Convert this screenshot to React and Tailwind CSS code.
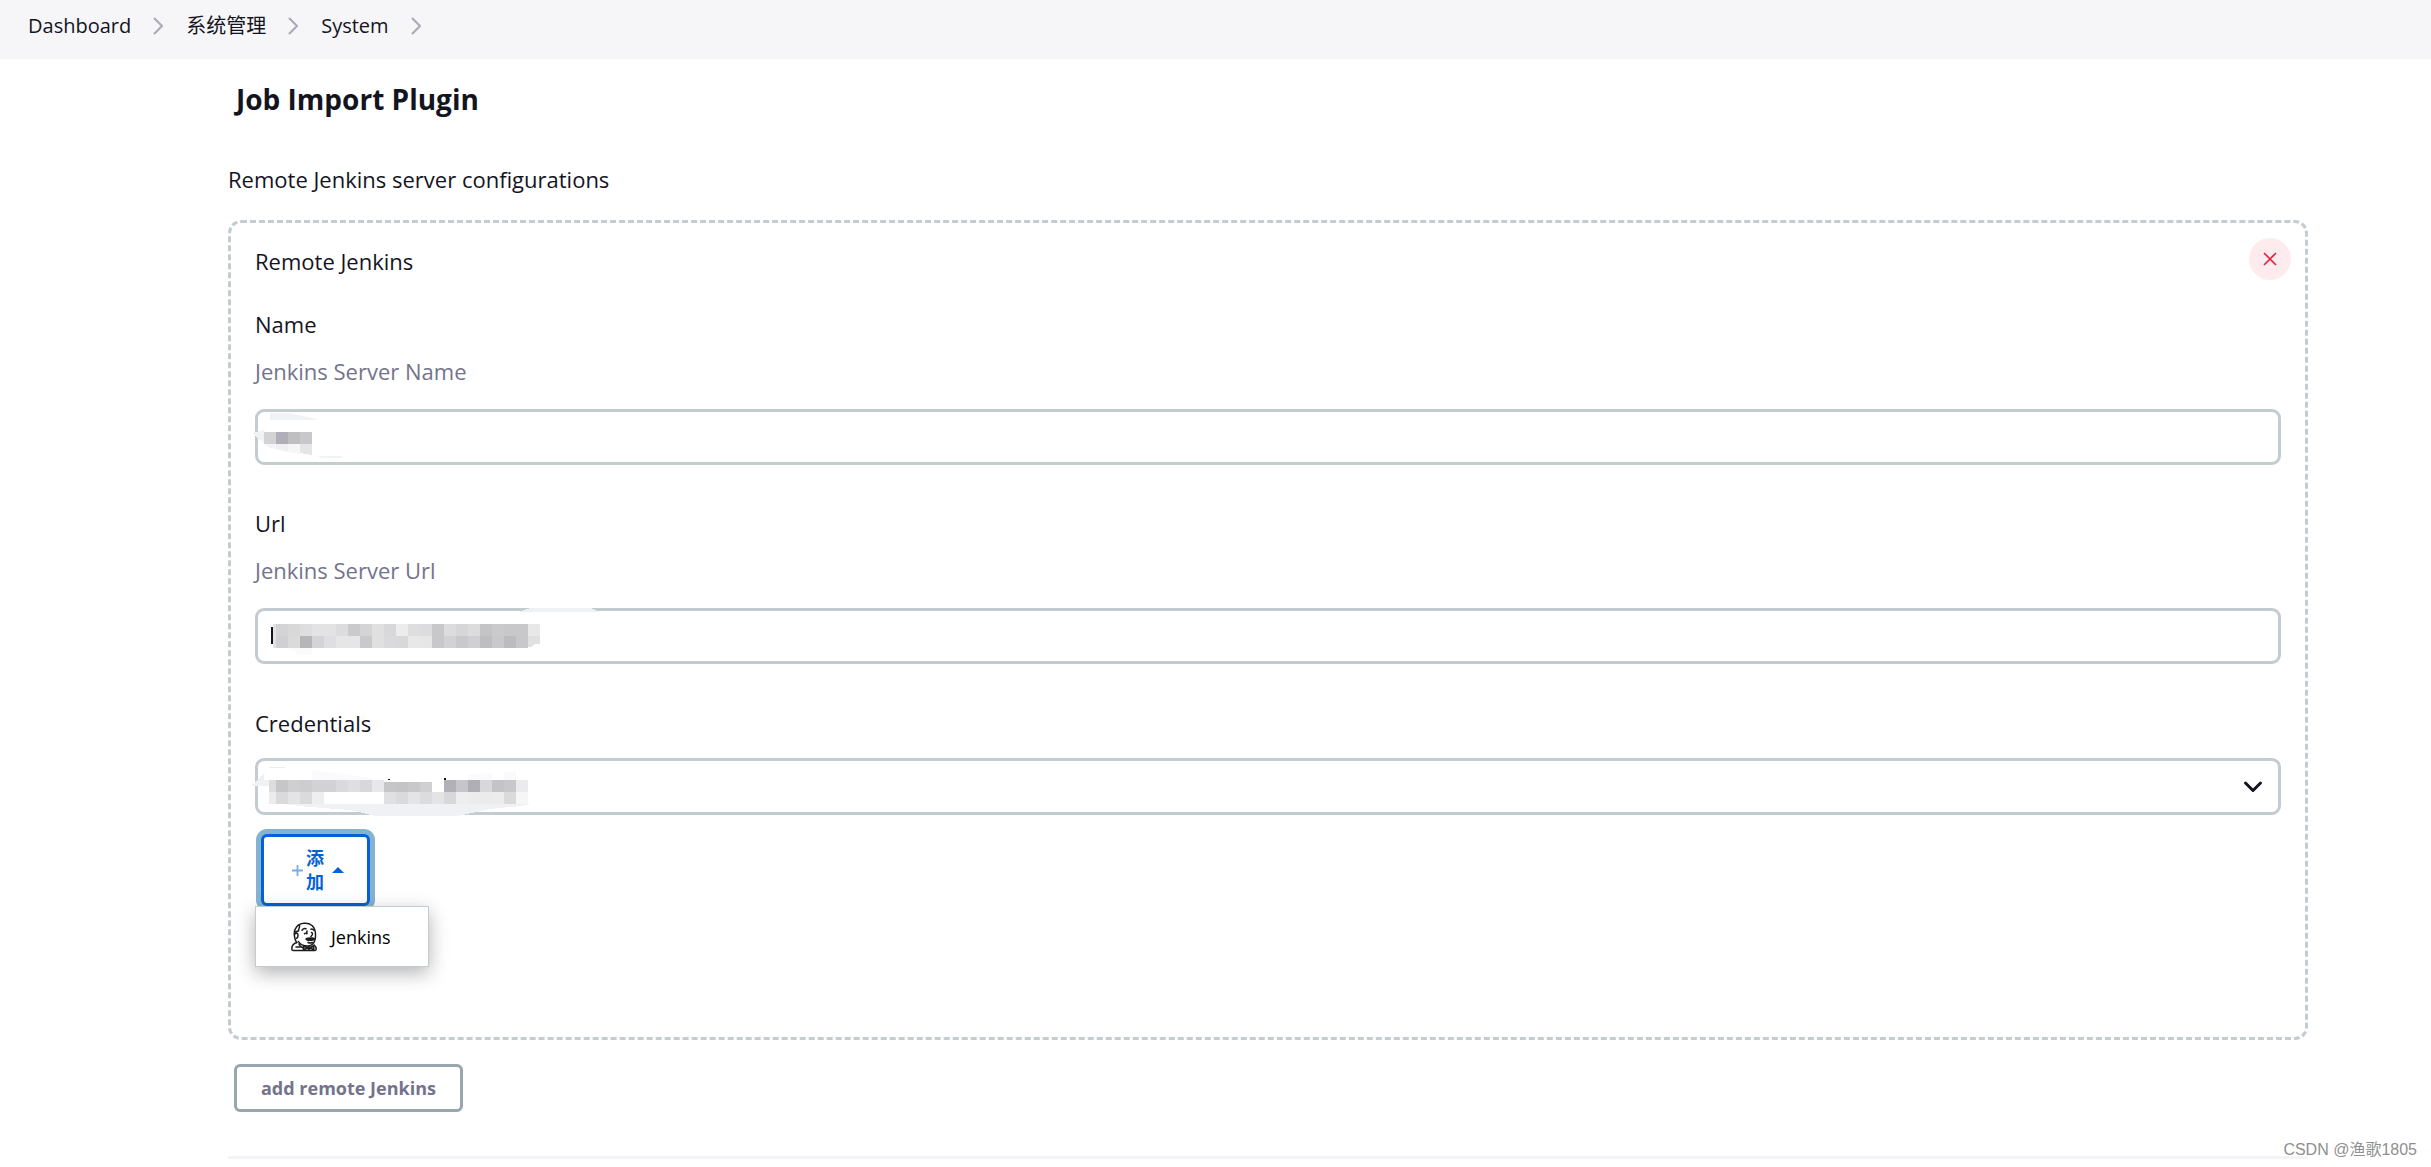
const SANS = "font-['Open_Sans','Noto_Sans_CJK_SC',sans-serif]";

const FIELD =
  "block w-full rounded-[9px] border-3 border-[#c3ccd1] bg-white px-4 text-[22px] text-[#14141f] outline-none";

const NAME_CELLS = [
  { x: 14, y: 27, h: 12, colors: ["#d3d3d5", "#b0afb7", "#bfbec1", "#c8c8cb"] },
];

const URL_CELLS = [
  {
    x: 26, y: 20, h: 12,
    colors: [
      "#d4d4d6", "#d8d8d8", "#dedede", "#e3e3e5", "#e3e3e3", "#dcdcde", "#cacacc", "#d4d4d6",
      "#e0e0e0", "#d8d8da", "#ececec", "#dedede", "#dcdcdf", "#c8c8ca", "#dcdcde", "#d6d6d8",
      "#dcdcdc", "#c4c4c6", "#cacacc", "#c8c8ca", "#c8c8ca", "#e8e8e8",
    ],
  },
  {
    x: 26, y: 32, h: 12,
    colors: [
      "#d0d0d2", "#dadada", "#b6b6b8", "#d4d4d6", "#dfdfe1", "#e6e6e6", "#e6e6e6", "#c9c9cb",
      "#e0e0e0", "#dadadc", "#d8d8d8", "#e8e8e8", "#e6e6e6", "#c8c8ca", "#d2d2d4", "#c9c9cb",
      "#d0d0d2", "#bebec0", "#c9c9cb", "#bcbcbe", "#c8c8ca",
    ],
  },
];

const CREDENTIAL_CELLS = [
  {
    x: 26, y: 26, h: 12,
    colors: [
      "#c6c6c8", "#cfcfd1", "#cdcdcf", "#d2d2d4", "#d2d2d4", "#dadadc", "#dfdfe1", "#d8d8da", "#e8e8ea",
    ],
  },
  { x: 134, y: 28, h: 10, colors: ["#c6c6c8", "#c4c4c7", "#c8c8cb", "#d0d0d2"] },
  {
    x: 194, y: 26, h: 12,
    colors: ["#b2b1b7", "#c6c6ca", "#b0afb6", "#d8d8dc", "#c4c4c7", "#c8c8cb", "#ebebed"],
  },
  { x: 26, y: 38, h: 12, colors: ["#dadadc", "#e4e4e6", "#dadadc", "#eeeeee"] },
  {
    x: 134, y: 38, h: 12,
    colors: [
      "#e0e0e2", "#dadadc", "#e4e4e6", "#dcdcde", "#e4e4e6", "#d8d8da",
      "#eeeeee", "#ececec", "#ebebeb", "#ececec", "#dadada", "#f6f6f6",
    ],
  },
];

function Mosaic({ rows, children }) {
  return (
    <svg
      className="pointer-events-none absolute -top-1 -left-[5px]"
      width="360"
      height="66"
      viewBox="0 0 360 66"
      shapeRendering="crispEdges"
      aria-hidden="true"
    >
      {children}
      {rows.map((row) =>
        row.colors.map((color, i) => (
          <rect key={`${row.x}-${row.y}-${i}`} x={row.x + i * 12} y={row.y} width="12" height={row.h} fill={color} />
        ))
      )}
    </svg>
  );
}

function Separator() {
  return (
    <svg className="mx-[22px]" width="11" height="18" viewBox="0 0 11 18" fill="none" aria-hidden="true">
      <path d="M1.5 1.5 9 9l-7.5 7.5" stroke="#a9a9b8" strokeWidth="2" strokeLinecap="round" strokeLinejoin="round" />
    </svg>
  );
}

function JenkinsIcon() {
  return (
    <svg width="26" height="30" viewBox="0 0 26 30" fill="none" stroke="#1c1c1c" strokeWidth="1.5" strokeLinecap="round" strokeLinejoin="round" aria-hidden="true">
      <path d="M5.5 20.5C3 16 2 9 5.500 5 9 .6 17 .2 21 3.500c4 3.500 3.800 9 3.300 13-.5 4-3.300 7.500-7.300 7.500-4.500 0-8-1.500-9.500-4.500" />
      <path d="M8.500 3.500c.5 2-1 3-1 5.500M4 12c1.500-1.500 3-.8 3 1s-.2 3-1.500 3.200M7 9l-2.800 1" />
      <path d="M11 8.200c1-1.400 2.400-1.900 4-1.500M20 7.200c1.200-.3 2.200.2 2.800 1.200M13.500 11.800c.8-.8 1.800-.8 2.500 0M16 9l-.3 2.500M20.500 10.500c1 .2 1.500 1.800.3 3l-1 1" />
      <path d="M15 17c1.800-1 3-1.300 4.500-.8 1.500-.6 2.500-.4 4 .5-1.200 2-2.600 1.700-4 1.300-1.600.7-3.200.5-4.500-1z" fill="#1c1c1c" />
      <path d="M17 20.500c1.500.6 3 .6 4.300 0" />
      <path d="M6 20.500c-3.500 1-5.300 3.200-5.200 6.500 0 1 .4 1.600 1.400 1.600h21.500c1 0 1.500-.6 1.500-1.600 0-1.600-.8-3-2-4" />
      <path d="M8 22c.5 1.500 2 3 3.800 3.800M5 25h4" />
      <path d="m12.500 23.800 4.300 2-4.300 2.400zM22.800 23.500l-3.800 2.200 3.800 2.500z" fill="#777" />
      <circle cx="18" cy="26" r="1.300" fill="#1c1c1c" />
    </svg>
  );
}

function Breadcrumbs() {
  const items = ["Dashboard", "系统管理", "System"];
  return (
    <nav className="h-[59px] bg-[#f6f6f8] pl-7" aria-label="Breadcrumb">
      <ol className="flex h-[52px] items-center text-[20px] text-[#14141f]">
        {items.map((item) => (
          <li key={item} className="flex items-center">
            <a href="#">{item}</a>
            <Separator />
          </li>
        ))}
      </ol>
    </nav>
  );
}

function Field({ id, label, help, children }) {
  return (
    <div className="mb-[42px]">
      <label htmlFor={id} className="block">{label}</label>
      <p className="mt-[15px] mb-[22px] text-[#73738c]">{help}</p>
      <div className="relative">
        <input id={id} type="text" className={`${FIELD} h-14`} />
        {children}
      </div>
    </div>
  );
}

export default function App() {
  return (
    <div className={`relative min-h-screen bg-white ${SANS} text-[22px] leading-8 text-[#14141f]`}>
      <Breadcrumbs />
      <main className="mr-[123px] ml-[228px] pt-5">
        <h2 className="pl-2 text-[28px] leading-10 font-bold">Job Import Plugin</h2>
        <h3 className="mt-11 mb-[25px]">Remote Jenkins server configurations</h3>

        <section className="relative rounded-[13px] border-3 border-dashed border-[#c3ccd1] px-6 pt-[22px] pb-[131px]">
          <button
            type="button"
            aria-label="Remove"
            className="absolute top-[15px] right-[14px] flex size-[42px] items-center justify-center rounded-full bg-[#fdebed]"
          >
            <svg width="14" height="14" viewBox="0 0 14 14" fill="none" aria-hidden="true">
              <path d="m1.500 1.500 11 11M12.500 1.500l-11 11" stroke="#e6203c" strokeWidth="1.700" strokeLinecap="round" />
            </svg>
          </button>

          <div className="mb-[31px]">Remote Jenkins</div>

          <Field id="name" label="Name" help="Jenkins Server Name">
            <Mosaic rows={NAME_CELLS}>
              <path d="M20 8h17l30 6v1H20z" fill="#f1f2f3" />
              <path d="M2 28l12-3v14l-4-4z" fill="#f1f2f3" />
              <path d="M14 39h12v5l-6-1z" fill="#f5f5f5" />
              <path d="M26 39h12v8l-12-3z" fill="#f0f0f0" />
              <path d="M38 39h12v10l-12-2z" fill="#f6f6f6" />
              <path d="M50 39h12v11l-12-2z" fill="#e5e5e7" />
              <path d="M68 51h24v2H72z" fill="#f1f2f3" />
            </Mosaic>
          </Field>

          <Field id="url" label="Url" help="Jenkins Server Url">
            <Mosaic rows={URL_CELLS}>
              <path d="M268 8l12-4h61l6 3v1z" fill="#f0f1f2" />
              <path d="M21 23h2v17h-2z" fill="#14141f" />
              <path d="M23 20h3v24h-3z" fill="#e2e2e4" />
              <path d="M278 32h12v8h-5l-4 3h-3z" fill="#e0e0e3" />
              <path d="M38 44h24v7H50z" fill="#fbfbfb" />
            </Mosaic>
          </Field>

          <label htmlFor="credentials" className="mt-[43px] mb-[19px] block">Credentials</label>
          <div className="relative">
            <select id="credentials" className={`${FIELD} h-[57px] appearance-none`}>
              <option aria-label="Saved credential" value="" />
            </select>
            <Mosaic rows={CREDENTIAL_CELLS}>
              <path d="M62 16l60 8v2H62zM218 21l24-2v7h-24zM254 19l12-2v9h-12z" fill="#fafafa" />
              <path d="M19 13h16v1H19z" fill="#eeeeee" />
              <path d="M2 31l12-12v7h5v6H2z" fill="#f0f1f3" />
              <path d="M19 26h7v12h-7z" fill="#dddddf" />
              <path d="M19 38h7v12h-7z" fill="#ececec" />
              <path d="M32 50h250l-12 2-30 3-32 7h-82l-26-6-40-3z" fill="#f0f1f4" />
              <path d="M138 25h2v1h-2zM194 24h2v2h-2z" fill="#14141f" />
            </Mosaic>
            <svg className="pointer-events-none absolute top-[22px] right-[18px]" width="20" height="14" viewBox="0 0 20 14" fill="none" aria-hidden="true">
              <path d="m2.500 3 7.500 7.500L17.500 3" stroke="#14141f" strokeWidth="3" strokeLinecap="round" strokeLinejoin="round" />
            </svg>
          </div>

          <div className="relative mt-[19px]">
            <button
              type="button"
              aria-expanded="true"
              className="ml-1.5 flex h-[72px] w-[109px] items-center rounded-md border-3 border-[#0462d4] bg-white pl-7 text-[18px] leading-6 font-bold text-[#0462d4] ring-5 ring-[#84b3d1]"
            >
              <svg width="11" height="11" viewBox="0 0 11 11" aria-hidden="true">
                <path d="M5.500 0v11M0 5.500h11" stroke="#78ace8" strokeWidth="1.800" />
              </svg>
              <span className="ml-[3px] w-[18px]">添加</span>
              <svg className="ml-2" width="12" height="6" viewBox="0 0 12 6" aria-hidden="true">
                <path d="M0 6 6 0l6 6z" fill="#0462d4" />
              </svg>
            </button>
            <ul className="absolute top-full left-0 w-[174px] border border-[#c3ccd1] bg-white shadow-[0_6px_18px_rgba(0,0,0,0.3)]">
              <li>
                <button type="button" className="flex h-[59px] w-full items-center gap-[14px] pl-[35px] text-[18px] text-black">
                  <JenkinsIcon />
                  Jenkins
                </button>
              </li>
            </ul>
          </div>
        </section>

        <button
          type="button"
          className="mt-6 ml-1.5 flex h-12 items-center rounded-md border-3 border-[#98a6ae] bg-white px-6 text-[18px] font-bold text-[#73738c]"
        >
          add remote Jenkins
        </button>
        <hr className="mt-11 border-t-3 border-[#f3f3f8]" />
      </main>
      <div className="absolute right-[14px] bottom-[5px] font-['Liberation_Sans','Noto_Sans_CJK_SC',sans-serif] text-[16px] leading-6 text-[#8f8f8f]">
        CSDN @渔歌1805
      </div>
    </div>
  );
}
